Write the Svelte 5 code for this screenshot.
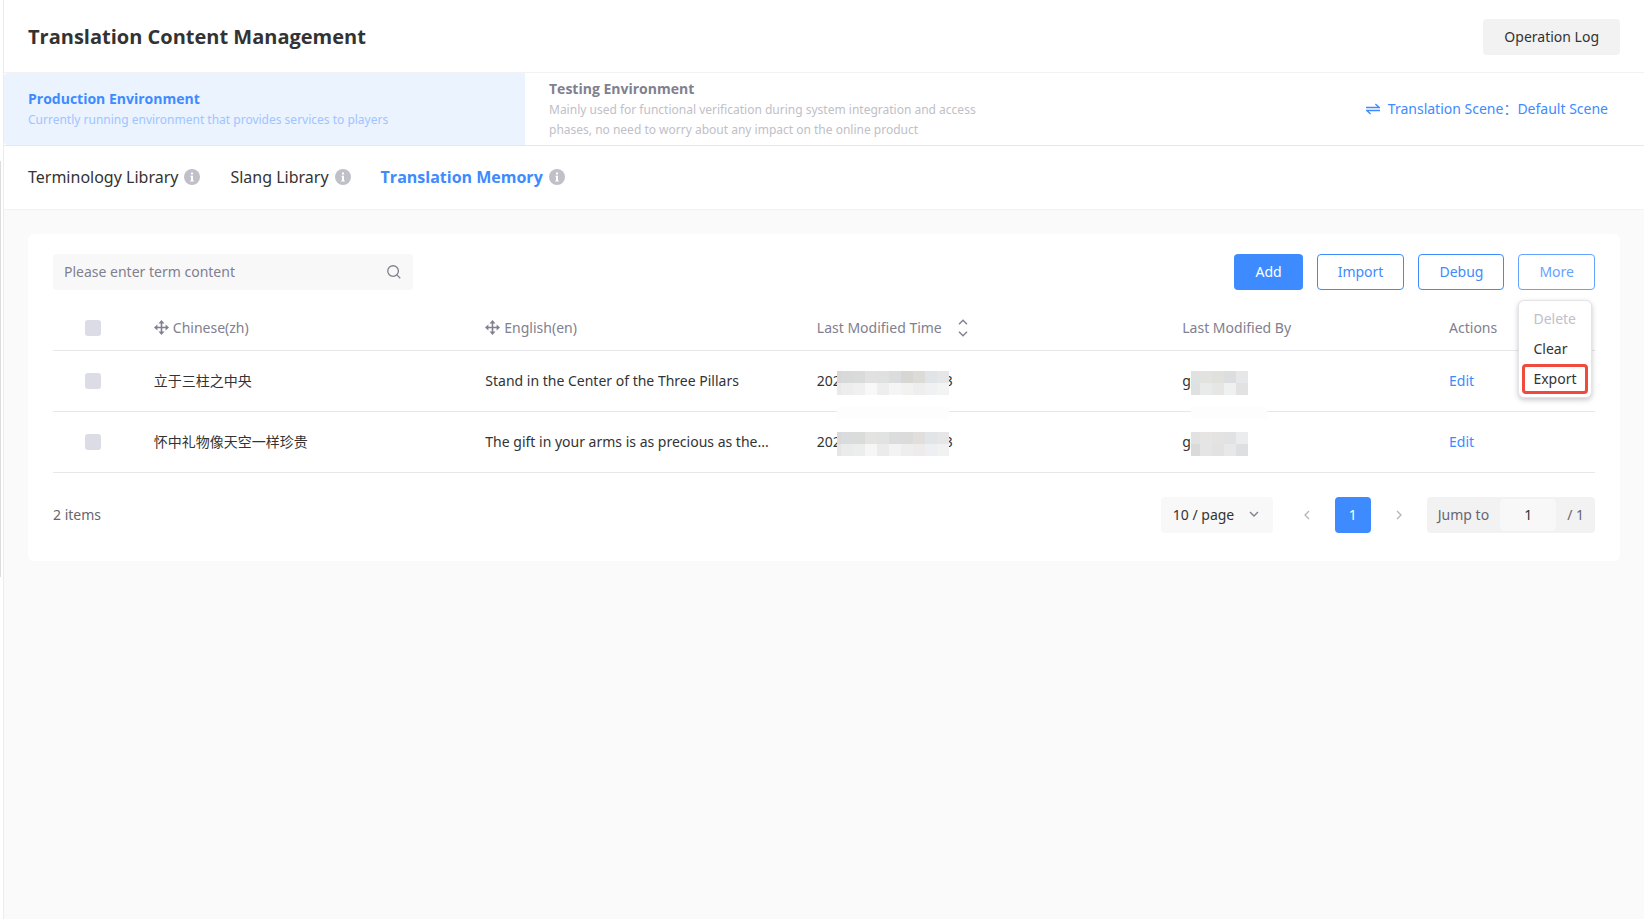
<script>
  const tabs = [
    { id: "terms", label: "Terminology Library" },
    { id: "slang", label: "Slang Library" },
    { id: "memory", label: "Translation Memory" },
  ];
  let activeTab = $state("memory");

  let keyword = $state("");
  let pageSize = $state("10 / page");
  let jumpTo = $state("1");
  let menuOpen = $state(true);

  // Masked values keep only their visible ends; the middle is a mosaic of cells.
  const rows = $state([
    {
      zh: "立于三柱之中央",
      en: "Stand in the Center of the Three Pillars",
      checked: false,
      time: [
        ["#d7d7d7", "#d8d9d9", "#d9dada", "#e1e1e1", "#dfe0e0", "#dbdcde", "#d8d6d3", "#dddbd8", "#e1e4e6", "#e6e6e6"],
        ["#e9e9e9", "#ededed", "#f0f0f0", "#f8f8f8", "#eeeeee", "#f5f5f5", "#f2f2f0", "#eeeeee", "#eff1f3", "#f3f3f3"],
      ],
      by: [
        ["#dfe1e3", "#e2e2e1", "#e0e0dc", "#dcdddf", "#e6e7e9"],
        ["#dfe1e1", "#e9eaea", "#e6e6e4", "#eef1f0", "#e2e2e3"],
      ],
    },
    {
      zh: "怀中礼物像天空一样珍贵",
      en: "The gift in your arms is as precious as the...",
      checked: false,
      time: [
        ["#d9d9d9", "#dadbdd", "#dbdbdc", "#e3e3e1", "#e1e2e2", "#dbdcde", "#dcdbdc", "#e1dfdd", "#e1e5e8", "#e6e6e7"],
        ["#e5e5e5", "#e9eceb", "#eceded", "#f6f6f6", "#ebebeb", "#f3f3f3", "#eeeeee", "#edebec", "#eeeff3", "#f1f1f1"],
      ],
      by: [
        ["#e2e2e3", "#e6e5e4", "#e4e3e2", "#e0e2e4", "#ebecee"],
        ["#dadada", "#e5e5e6", "#e2e2e2", "#e8e8e9", "#dedfe1"],
      ],
    },
  ]);

  let allChecked = $derived(rows.every((r) => r.checked));

  function toggleAll() {
    const next = !allChecked;
    rows.forEach((r) => (r.checked = next));
  }
</script>

{#snippet moveIcon()}
  <svg class="move" width="15" height="15" viewBox="0 0 15 15" aria-hidden="true">
    <path d="M7.5 2v11M2 7.5h11" stroke="currentColor" stroke-width="1.6" />
    <path
      d="M7.5 0l3 3.4h-6zM7.5 15l3-3.4h-6zM0 7.5l3.4-3v6zM15 7.5l-3.4-3v6z"
      fill="currentColor"
    />
  </svg>
{/snippet}

{#snippet mosaic(cells)}
  <span class="mosaic">
    {#each cells as line}
      <span class="mosaic-line">
        {#each line as color}
          <i style="background: {color}"></i>
        {/each}
      </span>
    {/each}
  </span>
{/snippet}

<div class="layout">
  <div class="rail"><div class="rail-thumb"></div></div>

  <div class="page">
    <header class="header">
      <h1>Translation Content Management</h1>
      <button class="btn plain">Operation Log</button>
    </header>

    <div class="envs">
      <button class="env active">
        <strong>Production Environment</strong>
        <span>Currently running environment that provides services to players</span>
      </button>
      <button class="env">
        <strong>Testing Environment</strong>
        <span>
          Mainly used for functional verification during system integration and access phases, no
          need to worry about any impact on the online product
        </span>
      </button>
      <a class="scene" href="#scene">
        <svg width="14" height="12" viewBox="0 0 14 12" fill="none" stroke="currentColor" aria-hidden="true">
          <path d="M0 4.5h13.2L9.4 1M14 7.5H.8L4.6 11" stroke-width="1.3" />
        </svg>
        <span>Translation Scene：Default Scene</span>
      </a>
    </div>

    <nav class="tabs">
      {#each tabs as tab}
        <button class="tab" class:active={activeTab === tab.id} onclick={() => (activeTab = tab.id)}>
          {tab.label}
          <svg width="16" height="16" viewBox="0 0 16 16" aria-hidden="true">
            <circle cx="8" cy="8" r="8" fill="#c0c0c8" />
            <path d="M7 3.6h2v2H7zM6.4 6.8H9v4.6h.8v1H6.2v-1H7V7.8h-.6z" fill="#fff" />
          </svg>
        </button>
      {/each}
    </nav>

    <main class="content">
      <section class="card">
        <div class="toolbar">
          <label class="search">
            <input type="text" placeholder="Please enter term content" aria-label="Term content" bind:value={keyword} />
            <svg width="14" height="14" viewBox="0 0 15 15" fill="none" stroke="#808090" stroke-width="1.4" aria-hidden="true">
              <circle cx="6.5" cy="6.5" r="5.7" />
              <path d="M10.6 10.6l3.6 3.6" />
            </svg>
          </label>
          <div class="buttons">
            <button class="btn primary">Add</button>
            <button class="btn outline">Import</button>
            <button class="btn outline">Debug</button>
            <div class="more">
              <button class="btn outline light" aria-expanded={menuOpen} onclick={() => (menuOpen = !menuOpen)}>
                More
              </button>
              {#if menuOpen}
                <div class="menu" role="menu">
                  <button role="menuitem" disabled>Delete</button>
                  <button role="menuitem">Clear</button>
                  <button role="menuitem" class="marked">Export</button>
                </div>
              {/if}
            </div>
          </div>
        </div>

        <table>
          <colgroup>
            <col class="c-check" />
            <col class="c-text" />
            <col class="c-text" />
            <col class="c-time" />
            <col class="c-by" />
            <col class="c-act" />
          </colgroup>
          <thead>
            <tr>
              <th class="check">
                <input type="checkbox" aria-label="Select all" checked={allChecked} onchange={toggleAll} />
              </th>
              <th><span class="head">{@render moveIcon()}Chinese(zh)</span></th>
              <th><span class="head">{@render moveIcon()}English(en)</span></th>
              <th>
                <span class="head">
                  Last Modified Time
                  <svg class="sort" width="10" height="18" viewBox="0 0 10 18" fill="none" stroke="currentColor" stroke-width="1.4" aria-hidden="true">
                    <path d="M1 5.2L5 1.2l4 4M1 12.8l4 4 4-4" />
                  </svg>
                </span>
              </th>
              <th>Last Modified By</th>
              <th>Actions</th>
            </tr>
          </thead>
          <tbody>
            {#each rows as row, i}
              <tr>
                <td class="check">
                  <input type="checkbox" aria-label="Select row {i + 1}" bind:checked={row.checked} />
                </td>
                <td>{row.zh}</td>
                <td>{row.en}</td>
                <td>
                  <span class="masked" class:veil={i === 0}>
                    202{@render mosaic(row.time)}<span class="tail">3</span>
                  </span>
                </td>
                <td>
                  <span class="masked by" class:veil={i === 0}>g{@render mosaic(row.by)}</span>
                </td>
                <td><a href="#edit">Edit</a></td>
              </tr>
            {/each}
          </tbody>
        </table>

        <footer class="footer">
          <span>{rows.length} items</span>
          <div class="pager">
            <label class="size">
              <select aria-label="Page size" bind:value={pageSize}>
                <option>10 / page</option>
                <option>20 / page</option>
                <option>50 / page</option>
              </select>
              <svg width="10" height="7" viewBox="0 0 10 7" fill="none" stroke="#808090" stroke-width="1.4" aria-hidden="true">
                <path d="M1 1l4 4 4-4" />
              </svg>
            </label>
            <div class="pages">
              <button class="arrow" aria-label="Previous page">
                <svg width="6" height="10" viewBox="0 0 6 10" fill="none" stroke="currentColor" stroke-width="1.3">
                  <path d="M5 1L1 5l4 4" />
                </svg>
              </button>
              <button class="current">1</button>
              <button class="arrow" aria-label="Next page">
                <svg width="6" height="10" viewBox="0 0 6 10" fill="none" stroke="currentColor" stroke-width="1.3">
                  <path d="M1 1l4 4-4 4" />
                </svg>
              </button>
            </div>
            <label class="jump">
              Jump to
              <input type="text" bind:value={jumpTo} />
              <span>/ 1</span>
            </label>
          </div>
        </footer>
      </section>
    </main>
  </div>
</div>

<style>
  :global(body) {
    margin: 0;
    background: #fafafa;
  }
  .layout {
    display: flex;
    min-height: 100vh;
    font-family: "Noto Sans", "Noto Sans CJK SC", sans-serif;
    font-size: 14px;
    line-height: 20px;
    color: #333;
  }
  .layout *,
  .layout *::before,
  .layout *::after {
    box-sizing: border-box;
  }
  button,
  input,
  select {
    font: inherit;
    color: inherit;
    border: none;
    background: none;
    margin: 0;
    padding: 0;
    outline: none;
  }
  button {
    cursor: pointer;
  }
  a {
    color: #3d8bff;
    text-decoration: none;
  }
  svg {
    flex: none;
    display: block;
  }
  h1,
  strong,
  .tab.active {
    font-family: "Open Sans", sans-serif;
    font-weight: 700;
  }

  .rail {
    flex: none;
    width: 4px;
    padding-top: 161px;
    background: #fff;
    border-right: 1px solid #ececee;
  }
  .rail-thumb {
    width: 1px;
    height: 416px;
    background: #dddde0;
  }
  .page {
    flex: 1;
    min-width: 0;
  }

  .header {
    display: flex;
    align-items: center;
    justify-content: space-between;
    height: 73px;
    padding: 2px 24px 0;
    background: #fff;
    border-bottom: 1px solid #f2f2f2;
  }
  h1 {
    margin: 0;
    font-size: 20px;
    line-height: 28px;
  }
  .btn {
    height: 36px;
    padding: 0 21px;
    border-radius: 4px;
  }
  .btn.plain {
    background: #f2f2f2;
  }
  .btn.primary {
    background: #3d8bff;
    color: #fff;
  }
  .btn.outline {
    padding: 0 20px;
    border: 1px solid #3d8bff;
    color: #3d8bff;
  }
  .btn.light {
    border-color: #64a2ff;
    color: #64a2ff;
  }

  .envs {
    display: flex;
    align-items: stretch;
    height: 73px;
    background: #fff;
    border-bottom: 1px solid #e8e8ea;
  }
  .env {
    display: flex;
    flex-direction: column;
    justify-content: center;
    gap: 1px;
    width: 521px;
    padding: 0 44px 0 24px;
    text-align: left;
    color: #808090;
    border-radius: 4px 0 0 4px;
  }
  .env span {
    font-size: 12px;
    color: #c0c0c8;
  }
  .env.active {
    background: #ebf3ff;
    color: #3d8bff;
  }
  .env.active span {
    color: #9ec5ff;
  }
  .scene {
    display: flex;
    align-items: center;
    gap: 8px;
    margin-left: auto;
    padding-right: 36px;
  }

  .tabs {
    display: flex;
    gap: 30px;
    height: 64px;
    padding: 0 24px 2px;
    background: #fff;
    border-bottom: 1px solid #f2f2f2;
  }
  .tab {
    display: flex;
    align-items: center;
    gap: 6px;
    font-size: 16px;
  }
  .tab.active {
    color: #3d8bff;
  }

  .content {
    padding: 24px;
  }
  .card {
    padding: 20px 25px 28px;
    background: #fff;
    border-radius: 6px;
  }
  .toolbar {
    display: flex;
    justify-content: space-between;
  }
  .search {
    display: flex;
    align-items: center;
    width: 360px;
    height: 36px;
    padding: 0 12px 0 11px;
    background: #f8f8f8;
    border-radius: 4px;
  }
  .search input {
    flex: 1;
    min-width: 0;
  }
  .search input::placeholder {
    color: #808090;
    opacity: 1;
  }
  .buttons {
    display: flex;
    gap: 14px;
  }
  .more {
    position: relative;
  }
  .menu {
    position: absolute;
    top: 46px;
    left: 0;
    z-index: 2;
    display: flex;
    flex-direction: column;
    min-width: 74px;
    padding: 3px;
    background: #fff;
    border: 1px solid #e4e4e8;
    border-radius: 6px;
    box-shadow: 0 2px 5px rgba(40, 40, 60, 0.25);
  }
  .menu button {
    height: 30px;
    padding: 0 8px;
    text-align: left;
    border: 3px solid transparent;
    border-radius: 4px;
  }
  .menu button:disabled {
    color: #c0c0c8;
  }
  .menu .marked {
    border-color: #f04a3e;
  }

  table {
    width: 100%;
    table-layout: fixed;
    border-collapse: collapse;
  }
  .c-check { width: 5.5%; }
  .c-text { width: 21.5%; }
  .c-time { width: 23.7%; }
  .c-by { width: 17.3%; }
  .c-act { width: 10.5%; }
  th,
  td {
    height: 61px;
    padding: 0 16px;
    text-align: left;
    white-space: nowrap;
    border-bottom: 1px solid #e8e8ea;
  }
  th {
    height: 60px;
    padding-top: 16px;
    font-weight: 400;
    color: #808090;
  }
  .check {
    padding-left: 32px;
  }
  .check input {
    appearance: none;
    display: block;
    width: 16px;
    height: 16px;
    border-radius: 3px;
    background: #dcdce6;
  }
  .check input:checked {
    background: #3d8bff;
  }
  .head {
    display: flex;
    align-items: center;
    gap: 4px;
  }
  .sort {
    margin-left: 12px;
  }

  .masked {
    position: relative;
    display: inline-flex;
    align-items: center;
    vertical-align: middle;
  }
  .mosaic {
    position: relative;
    z-index: 1;
    padding-top: 4px;
    margin-left: -4px;
  }
  .masked.by .mosaic {
    margin-left: 0;
  }
  .mosaic-line {
    display: flex;
  }
  .mosaic i {
    width: 12px;
    height: 12px;
  }
  .mosaic-line i:first-child {
    width: 4px;
  }
  .masked.by .mosaic-line i:first-child {
    width: 9px;
  }
  .tail {
    margin-left: -4px;
  }
  /* the mask also fades the row line below the first row */
  .veil .mosaic::after {
    content: "";
    position: absolute;
    top: 40px;
    left: 0;
    width: 100%;
    height: 12px;
    background: #fdfdfd;
  }
  .by.veil .mosaic::after {
    width: 76px;
  }

  .footer {
    display: flex;
    align-items: center;
    justify-content: space-between;
    margin-top: 24px;
    color: #666670;
  }
  .pager {
    display: flex;
    align-items: center;
  }
  .size {
    position: relative;
    display: flex;
    align-items: center;
    color: #333;
  }
  .size select {
    appearance: none;
    width: 112px;
    height: 36px;
    padding: 0 12px;
    background: #f8f8f8;
    border-radius: 4px;
  }
  .size svg {
    position: absolute;
    right: 14px;
    pointer-events: none;
  }
  .pages {
    display: flex;
    gap: 10px;
    margin: 0 10px 0 16px;
  }
  .pages button {
    display: flex;
    align-items: center;
    justify-content: center;
    width: 36px;
    height: 36px;
    border-radius: 4px;
  }
  .pages .arrow {
    color: #b4b4bc;
  }
  .pages .current {
    background: #3d8bff;
    color: #fff;
  }
  .jump {
    display: flex;
    align-items: center;
    height: 36px;
    padding: 0 11px;
    gap: 11px;
    background: #f2f2f2;
    border-radius: 4px;
  }
  .jump input {
    width: 56px;
    height: 32px;
    text-align: center;
    color: #333;
    background: #f8f8f8;
    border-radius: 4px;
  }
</style>
